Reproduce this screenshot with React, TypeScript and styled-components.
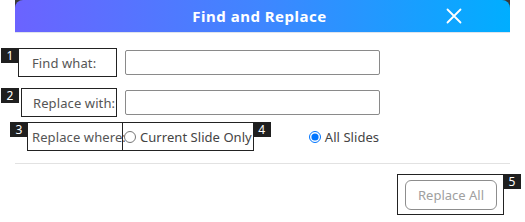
import styled, { createGlobalStyle } from "styled-components";

const GlobalStyle = createGlobalStyle`
  body {
    margin: 0;
    background: #ffffff;
    font-family: "Noto Sans", "Liberation Sans", sans-serif;
  }
`;

const Page = styled.div`
  position: relative;
  width: 525px;
  height: 222px;
  overflow: hidden;
`;

const Modal = styled.div`
  margin-left: 15px;
  width: 495px;
`;

const HeaderBack = styled.div`
  background: #3a3a3a;
`;

const Header = styled.div`
  position: relative;
  display: flex;
  align-items: center;
  justify-content: center;
  height: 32px;
  border-radius: 8px 8px 0 0;
  background: linear-gradient(90deg, #6b63ff 0%, #3f86ff 50%, #00aeff 100%);
  border-bottom: 1px solid #dfe4ec;
`;

const Title = styled.h1`
  margin: 0 0 0 -6px;
  font-size: 15px;
  font-weight: 700;
  letter-spacing: 0.5px;
  color: #ffffff;
`;

const Close = styled.button`
  position: absolute;
  right: 48px;
  top: 8px;
  width: 16px;
  height: 16px;
  padding: 0;
  border: none;
  background: none;
  display: flex;
`;

const Body = styled.div`
  display: flex;
  flex-direction: column;
`;

const Row = styled.div<{ $top: number }>`
  display: flex;
  align-items: flex-start;
  margin-top: ${({ $top }) => $top}px;
`;

const Label = styled.label<{ $left: number; $width: number; $pad: number }>`
  position: relative;
  box-sizing: border-box;
  display: flex;
  align-items: center;
  height: 29px;
  width: ${({ $width }) => $width}px;
  margin-left: ${({ $left }) => $left}px;
  padding-left: ${({ $pad }) => $pad}px;
  border: 1px solid #222;
  font-size: 13px;
  letter-spacing: 0.1px;
  color: #555;
  white-space: nowrap;
`;

const Badge = styled.span<{ $right?: boolean; $x?: number }>`
  position: absolute;
  top: -1px;
  ${({ $right, $x = 0 }) =>
    $right ? `left: calc(100% + ${$x}px);` : `right: calc(100% + ${$x}px);`}
  display: flex;
  align-items: center;
  justify-content: center;
  width: 18px;
  height: 15px;
  background: #1f1f1f;
  color: #ffffff;
  font-size: 12px;
  line-height: 1;
`;

const TextInput = styled.input`
  box-sizing: border-box;
  margin: 2px 0 0 8px;
  width: 255px;
  height: 25px;
  border: 1px solid #8a8a8a;
  border-radius: 2px;
`;

const RadioOption = styled.label<{ $boxed?: boolean }>`
  position: relative;
  box-sizing: border-box;
  display: flex;
  align-items: center;
  height: 29px;
  gap: 4px;
  padding-right: 1px;
  ${({ $boxed }) => ($boxed ? "border: 1px solid #222; border-left: none;" : "")}
  font-size: 13px;
  letter-spacing: 0.05px;
  color: #444;
  white-space: nowrap;
`;

const Radio = styled.input`
  margin: 0 0 0 1px;
  width: 12px;
  height: 12px;
`;

const Plain = styled.div`
  display: flex;
  margin-left: 54px;
`;

const Divider = styled.hr`
  margin: 12px 0 0;
  border: none;
  border-top: 1px solid #e2e2e2;
`;

const Footer = styled.div`
  display: flex;
  justify-content: flex-end;
  margin-top: 10px;
  padding-right: 6px;
`;

const Outline = styled.div`
  position: relative;
  padding: 5px 6px 4px 7px;
  border: 1px solid #222;
`;

const Button = styled.button`
  width: 92px;
  height: 30px;
  border: 1px solid #8d8d8d;
  border-radius: 6px;
  background: #ffffff;
  color: #a0a0a0;
  font-family: inherit;
  font-size: 13px;
`;

export default function App() {
  return (
    <Page>
      <GlobalStyle />
      <Modal>
        <HeaderBack>
          <Header>
            <Title>Find and Replace</Title>
            <Close aria-label="close">
              <svg width="16" height="16" viewBox="0 0 16 16">
                <path
                  d="M1.5 1.5 L14.5 14.5 M14.5 1.5 L1.5 14.5"
                  stroke="#fff"
                  strokeWidth="1.8"
                  strokeLinecap="round"
                />
              </svg>
            </Close>
          </Header>
        </HeaderBack>
        <Body>
          <Row $top={15}>
            <Label $left={3} $width={99} $pad={13}>
              <Badge>1</Badge>
              Find what:
            </Label>
            <TextInput />
          </Row>
          <Row $top={11}>
            <Label $left={6} $width={96} $pad={11}>
              <Badge $x={3}>2</Badge>
              Replace with:
            </Label>
            <TextInput />
          </Row>
          <Row $top={5}>
            <Label $left={12} $width={96} $pad={4}>
              <Badge>3</Badge>
              Replace where:
            </Label>
            <RadioOption $boxed>
              <Radio type="radio" name="where" />
              Current Slide Only
              <Badge $right>4</Badge>
            </RadioOption>
            <Plain>
              <RadioOption>
                <Radio type="radio" name="where" defaultChecked />
                All Slides
              </RadioOption>
            </Plain>
          </Row>
          <Divider />
          <Footer>
            <Outline>
              <Button>Replace All</Button>
              <Badge $right>5</Badge>
            </Outline>
          </Footer>
        </Body>
      </Modal>
    </Page>
  );
}
